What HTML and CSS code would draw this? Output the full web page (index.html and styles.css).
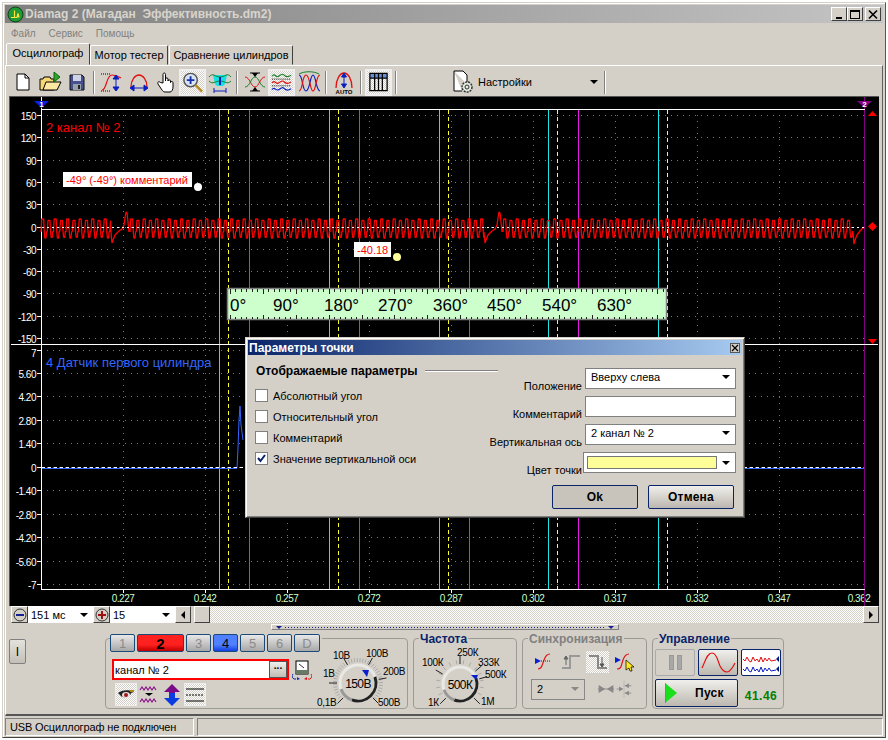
FILE: index.html
```html
<!DOCTYPE html>
<html lang="ru">
<head>
<meta charset="utf-8">
<title>Diamag 2</title>
<link rel="stylesheet" href="styles.css">
</head>
<body>
<div class="window">
  <div class="titlebar">
    <svg class="app-icon" viewBox="0 0 17 17" width="17" height="17"><circle cx="8.500" cy="8.500" r="7.500" fill="#1f9a35" stroke="#0a3d12" stroke-width="1"/><path d="M4 11.500h3.500V4.500v7H10l1-4 1 4" fill="none" stroke="#ffe23a" stroke-width="1.200"/></svg>
    <span class="app-title">Diamag 2 (Магадан&nbsp; Эффективность.dm2)</span>
    <div class="win-btns">
      <span class="win-btn"><svg viewBox="0 0 14 13" width="14" height="13"><rect x="4" y="9" width="6" height="2"/></svg></span>
      <span class="win-btn"><svg viewBox="0 0 14 13" width="14" height="13"><path d="M2 2h10v9H2zM3 4v6h8V4z" fill-rule="evenodd"/></svg></span>
      <span class="win-btn win-btn-close"><svg viewBox="0 0 14 13" width="14" height="13"><path d="M3 2.500l8 8M11 2.500l-8 8" stroke="#000" stroke-width="1.600"/></svg></span>
    </div>
  </div>
  <div class="menubar"><span>Файл</span><span>Сервис</span><span>Помощь</span></div>
  <div class="tabs">
    <span class="tab tab-active">Осциллограф</span>
    <span class="tab tab-2">Мотор тестер</span>
    <span class="tab tab-3">Сравнение цилиндров</span>
  </div>
  <div class="tabbody">
    <div class="toolbar">
      <span class="tool"><svg viewBox="0 0 24 24"><path d="M6 4h8l4 4v12H6z" fill="#fff" stroke="#000"/><path d="M14 4v4h4" fill="none" stroke="#000"/></svg></span>
      <span class="tool"><svg viewBox="0 0 24 24"><path d="M2 9h3l1-2h6l1 2h3v11H2z" fill="#f7d774" stroke="#000"/><path d="M5 20l3-8h15l-4 8z" fill="#ffe9a0" stroke="#000"/><path d="M16 2l6 5-6 5z" fill="#2da52d" stroke="#0a6a0a"/></svg></span>
      <span class="tool"><svg viewBox="0 0 24 24"><path d="M5 5h12l2 2v13H5z" fill="#47518f" stroke="#111"/><rect x="8" y="5" width="8" height="6" fill="#cfd3e6"/><rect x="8" y="14" width="8" height="6" fill="#9aa0a8"/><rect x="13" y="15" width="2" height="4" fill="#222"/></svg></span>
      <span class="tool-sep"></span>
      <span class="tool"><svg viewBox="0 0 24 24"><path d="M2 20c5 0 4-15 10-15 3 0 6 1 9 3" fill="none" stroke="#e01010" stroke-width="1.200"/><path d="M1 4h9M1 21h9" stroke="#000" stroke-dasharray="1 1"/><path d="M16 6v14M13 9l3-4 3 4zM13 17l3 4 3-4z" fill="#0a1fc0" stroke="#0a1fc0"/></svg></span>
      <span class="tool"><svg viewBox="0 0 24 24"><path d="M4 17C4 10 8 5 12 5s8 5 8 12" fill="none" stroke="#e01010" stroke-width="1.300"/><path d="M4 18h16M7 15l-4 3 4 3zM17 15l4 3-4 3z" fill="#0a1fc0" stroke="#0a1fc0"/></svg></span>
      <span class="tool"><svg viewBox="0 0 24 24"><path d="M9 13V4.500c0-2 2.500-2 2.500 0V11l0-2c0-1.500 2.500-1.500 2.500 0v2c0-1.500 2.500-1.500 2.500 0v1.500c0-1.300 2.500-1.300 2.500 0V17c0 2-1 5-3 5h-5c-2 0-3-2-5-5l-2-3c-1-2 1-3 2.500-1.500z" fill="#fff" stroke="#000"/></svg></span>
      <span class="tool tool-on"><svg viewBox="0 0 24 24"><circle cx="10" cy="10" r="7" fill="#d8e6f4" stroke="#555" stroke-width="1.500"/><path d="M10 6v8M6 10h8" stroke="#1a2fb0" stroke-width="2"/><path d="M15 15l7 7" stroke="#b98a20" stroke-width="2.500"/></svg></span>
      <span class="tool"><svg viewBox="0 0 24 24"><path d="M5 5h14l-2 9-2 2H9l-2-2z" fill="#19e0e0"/><path d="M1 7c4-5 6 0 11 0s7-5 11 0" fill="none" stroke="#18802a"/><path d="M1 11c4 4 6 0 11 0s7 4 11 0" fill="none" stroke="#18802a"/><path d="M12 7v8" stroke="#0a1fc0" stroke-width="2"/><path d="M6 21h12M6 18v5M18 18v5" stroke="#0a1fc0"/></svg></span>
      <span class="tool-sep"></span>
      <span class="tool"><svg viewBox="0 0 24 24"><path d="M2 7c5 0 6 10 10 10s5-10 10-10" fill="none" stroke="#e01010"/><path d="M2 17c5 0 6-10 10-10s5 10 10 10" fill="none" stroke="#18802a"/><path d="M7 3h10M7 21h10" stroke="#000"/><path d="M9 3h6l-3 4zM9 21h6l-3-4z"/></svg></span>
      <span class="tool tool-on"><svg viewBox="0 0 24 24"><path d="M2 6c3-4 4 2 7 0s4-3 6-1 4 2 7 0" fill="none" stroke="#18802a" stroke-width="1.200"/><path d="M2 13c3-4 4 2 7 0s4-3 6-1 4 2 7 0" fill="none" stroke="#e01010" stroke-width="1.200"/><path d="M2 20c3-4 4 2 7 0s4-3 6-1 4 2 7 0" fill="none" stroke="#0a1fc0" stroke-width="1.200"/><path d="M2 9h20M2 16h20" stroke="#000" stroke-dasharray="1 1"/></svg></span>
      <span class="tool"><svg viewBox="0 0 24 24"><path d="M2 5c4 0 3 16 7 16s4-16 7-16 3 16 7 16" fill="none" stroke="#0a1fc0" stroke-width="1.200"/><path d="M2 21c4 0 3-16 7-16s4 16 7 16 3-16 7-16" fill="none" stroke="#e01010" stroke-width="1.200"/><path d="M2 4c5-3 15-3 20 0" fill="none" stroke="#18802a"/></svg></span>
      <span class="tool-sep"></span>
      <span class="tool"><svg viewBox="0 0 24 24"><path d="M4 18C4 9 8 3 12 3s8 6 8 15" fill="none" stroke="#e01010" stroke-width="1.300"/><path d="M12 4v13M9.500 7L12 3l2.500 4zM9.500 14l2.500 4 2.500-4z" fill="#0a1fc0" stroke="#0a1fc0"/><text x="12" y="24" class="auto-text">AUTO</text></svg></span>
      <span class="tool-sep"></span>
      <span class="tool tool-on"><svg viewBox="0 0 24 24"><rect x="3" y="3" width="18" height="5" fill="#6a8fd8"/><path d="M3 3h18v18H3zM3 8h18M8 3v18M12 3v18M16 3v18" fill="none" stroke="#000" stroke-width="1.300"/></svg></span>
      <span class="tool-sep"></span>
      <div class="settings">
        <svg viewBox="0 0 24 24" width="24" height="24"><path d="M3 1h9l4 4v9M3 1v20h8" fill="#fff" stroke="#000"/><circle cx="16" cy="17" r="5" fill="#dfe9dc" stroke="#333" stroke-dasharray="2 1" stroke-width="1.500"/><circle cx="16" cy="17" r="2" fill="none" stroke="#333"/></svg>
        <span class="settings-label">Настройки</span>
        <span class="arrow settings-arrow"></span>
      </div>
      <span class="tool-sep"></span>
    </div>
    <div class="chart">
      <svg id="plot" class="plot" viewBox="10 97 869 509" width="869" height="509"></svg>
    </div>
    <div class="scrollrow">
      <span class="round-btn"><svg viewBox="0 0 14 14" width="14" height="14"><circle cx="7" cy="7" r="6" fill="#d4d0c8" stroke="#333"/><path d="M3 7h8" stroke="#14208f" stroke-width="2"/></svg></span>
      <span class="scroll-combo combo-a">151 мс<span class="arrow"></span></span>
      <span class="round-btn"><svg viewBox="0 0 14 14" width="14" height="14"><circle cx="7" cy="7" r="6" fill="#d4d0c8" stroke="#333"/><path d="M3 7h8M7 3v8" stroke="#a01010" stroke-width="2"/></svg></span>
      <span class="scroll-combo combo-b">15<span class="arrow"></span></span>
      <span class="scroll-btn"><span class="tri-left"></span></span>
      <span class="scroll-thumb"></span>
      <span class="scroll-track"></span>
      <span class="scroll-btn"><span class="tri-right"></span></span>
    </div>
    <div class="splitter"><span class="split-tri"></span><span class="split-dots"></span><span class="split-tri"></span></div>
    <div class="controls">
      <span class="side-btn">I</span>
      <div class="group group-channel">
        <div class="channel-col">
          <div class="channels">
            <span class="ch">1</span><span class="ch ch-red">2</span><span class="ch">3</span><span class="ch ch-blue">4</span><span class="ch">5</span><span class="ch">6</span><span class="ch ch-d">D</span>
          </div>
          <div class="name-row">
            <div class="name-field"><span class="name-text">канал № 2</span><span class="dots-btn">...</span></div>
            <svg class="meter" viewBox="0 0 20 20" width="20" height="20"><rect x="4" y="1" width="12" height="13" fill="#fff" stroke="#000"/><rect x="4" y="10" width="12" height="4" fill="#667a66"/><path d="M7 4l5 4" stroke="#333"/><path d="M1 14a3 3 0 0 0 3 5" fill="none" stroke="#1020b0"/><path d="M19 14a3 3 0 0 1-3 5" fill="none" stroke="#e01010"/><path d="M5 17l3 2-3 1z" fill="#1020b0"/><path d="M15 17l-3 2 3 1z" fill="#e01010"/></svg>
          </div>
          <div class="view-row">
            <span class="view-btn view-on"><svg viewBox="0 0 20 20" width="20" height="20"><path d="M2 8c3-3 11-4 16-1l-3 1c-1 5-9 6-11 2z" fill="#222"/><ellipse cx="10" cy="10" rx="4" ry="3" fill="#e8e0e0"/><circle cx="10" cy="10" r="2" fill="#a01818"/><path d="M14 6l4 0" stroke="#b08a10" stroke-width="2"/></svg></span>
            <span class="view-btn"><svg viewBox="0 0 20 20" width="20" height="20"><path d="M1 5l2-3 2 3 2-3 2 3 2-3 2 3 2-3 2 3M1 17l2-3 2 3 2-3 2 3 2-3 2 3 2-3 2 3" fill="none" stroke="#8a108a" stroke-width="1.200"/><path d="M6 8h8l-4 3z"/></svg></span>
            <span class="view-btn"><svg viewBox="0 0 20 24" width="20" height="24"><path d="M10 1l8 8h-5v5H7V9H2z" fill="#7a0a8a"/><path d="M10 23l-8-8h5v-5h6v5h5z" fill="#0a3ce0"/></svg></span>
            <span class="view-btn view-on"><svg viewBox="0 0 20 20" width="20" height="20"><path d="M1 4h18M1 16h18" stroke="#000" stroke-width="1.200"/><path d="M1 10h18" stroke="#000" stroke-dasharray="2 1"/></svg></span>
          </div>
        </div>
        <svg class="knob" viewBox="320 640 86 69" width="86" height="69">
          <g id="knob-a"></g>
          <text x="358" y="689" class="knob-value" text-anchor="middle">150В</text>
          <path d="M362 671h7l-2 7z" fill="#0a1fd0"/>
          <text x="333" y="660" class="knob-label">10В</text>
          <text x="366" y="658" class="knob-label">100В</text>
          <text x="383" y="676" class="knob-label">200В</text>
          <text x="378" y="707" class="knob-label">500В</text>
          <text x="317" y="707" class="knob-label">0,1В</text>
          <text x="323" y="678" class="knob-label">1В</text>
        </svg>
      </div>
      <div class="group group-freq">
        <span class="group-title">Частота</span>
        <svg class="knob knob-f" viewBox="414 640 102 69" width="102" height="69">
          <g id="knob-b"></g>
          <text x="460" y="690" class="knob-value" text-anchor="middle">500К</text>
          <path d="M471 676h7l-2 5z" fill="#0a1fd0"/>
          <text x="457" y="657" class="knob-label">250К</text>
          <text x="422" y="667" class="knob-label">100К</text>
          <text x="478" y="667" class="knob-label">333К</text>
          <text x="485" y="679" class="knob-label">500К</text>
          <text x="428" y="707" class="knob-label">1К</text>
          <text x="481" y="706" class="knob-label">1М</text>
        </svg>
      </div>
      <div class="group group-sync">
        <span class="group-title title-off">Синхронизация</span>
        <div class="sync-row">
          <span class="sync-btn"><svg viewBox="0 0 22 22" width="22" height="22"><path d="M5 18c4 0 4-4 6-9 1-3 3-6 6-6" fill="none" stroke="#e01010" stroke-width="1.200"/><path d="M2 7l6 3-6 3z" fill="#0a1fd0"/><path d="M8 10h9" stroke="#0a1fd0" stroke-dasharray="1 1"/></svg></span>
          <span class="sync-btn"><svg viewBox="0 0 22 22" width="22" height="22"><path d="M2 17h8V5h10" fill="none" stroke="#999" stroke-width="2"/><path d="M6 5v9M4 8l2-3 2 3z" stroke="#666" fill="#666"/></svg></span>
          <span class="sync-btn sync-on"><svg viewBox="0 0 22 22" width="22" height="22"><path d="M2 5h9v12h9" fill="none" stroke="#888" stroke-width="2"/><path d="M15 6v9M13 13l2 3 2-3z" stroke="#555" fill="#555"/></svg></span>
          <span class="sync-btn"><svg viewBox="0 0 22 22" width="22" height="22"><path d="M3 18c5 0 4-4 6-9 1-3 3-6 6-6" fill="none" stroke="#e01010" stroke-width="1.200"/><path d="M1 6l6 3-6 3z" fill="#0a1fd0"/><path d="M12 9l8 7-3 0 1 4-2 0-1-3-3 2z" fill="#ffe820" stroke="#000" stroke-width=".7"/></svg></span>
        </div>
        <div class="sync-row sync-row-2">
          <span class="sync-combo">2<span class="arrow arrow-gray"></span></span>
          <span class="sync-btn"><svg viewBox="0 0 22 22" width="22" height="22"><path d="M1 11h20" stroke="#888"/><path d="M2 6l8 5-8 5zM20 6l-8 5 8 5z" fill="#888"/></svg></span>
          <span class="sync-btn"><svg viewBox="0 0 22 22" width="22" height="22"><path d="M11 1v20" stroke="#aaa" stroke-dasharray="2 1"/><path d="M2 11h7" stroke="#888"/><path d="M12 7h8M12 16h8" stroke="#888"/><path d="M12 7l5-3v6zM12 16l5-3v6zM10 11l-5-3v6z" fill="#888"/></svg></span>
        </div>
      </div>
      <div class="group group-ctl">
        <span class="group-title">Управление</span>
        <div class="ctl-grid">
          <span class="ctl-btn ctl-off"><span class="pause-bar"></span><span class="pause-bar"></span></span>
          <span class="ctl-btn"><svg viewBox="0 0 36 24" width="36" height="24"><path d="M2 17c3-6 5-15 10-15s6 9 8 13 4 6 7 6 6-5 8-9" fill="none" stroke="#e01010" stroke-width="1.200"/></svg></span>
          <span class="ctl-btn ctl-white"><svg viewBox="0 0 38 24" width="38" height="24"><path d="M1 8l2 2 2-4 2 4 2 1 2-5 2 4 2-2 2 3 2-5 2 5 2-4 2 3 2-3 2 3 5-1" fill="none" stroke="#e01010"/><path d="M1 18l2 2 2-4 2 4 2 1 2-5 2 4 2-2 2 3 2-5 2 5 2-4 2 3 2-3 2 3 5-1" fill="none" stroke="#0a1fc0"/><path d="M37 5v6l-3-3zM37 15v6l-3-3z" fill="#001a80"/></svg></span>
          <span class="ctl-btn ctl-start"><svg viewBox="0 0 12 24" width="12" height="24"><path d="M0 2l12 10L0 22z" fill="#1adf1a"/><path d="M0 2v20" stroke="#777"/></svg><span class="start-label">Пуск</span></span>
          <span class="ctl-value">41.46</span>
        </div>
      </div>
    </div>
  </div>
  <div class="statusbar">
    <span class="status-pane status-first">USB Осциллограф не подключен</span>
    <span class="status-pane status-rest"></span>
  </div>
  <div class="dialog">
    <div class="dlg-title"><span>Параметры точки</span><span class="dlg-close"><svg viewBox="0 0 8 8" width="8" height="8"><path d="M1 1l6 6M7 1L1 7" stroke="#000" stroke-width="1.300"/></svg></span></div>
    <div class="dlg-body">
      <div class="dlg-left">
        <div class="dlg-head"><b>Отображаемые параметры</b><span class="dlg-rule"></span></div>
        <label class="chk"><span class="box"></span>Абсолютный угол</label>
        <label class="chk"><span class="box"></span>Относительный угол</label>
        <label class="chk"><span class="box"></span>Комментарий</label>
        <label class="chk"><span class="box"><svg viewBox="0 0 11 11" width="11" height="11"><path d="M2 5l2.500 3L9 2" fill="none" stroke="#0a246a" stroke-width="2"/></svg></span>Значение вертикальной оси</label>
      </div>
      <div class="dlg-right">
        <span class="dlg-label">Положение</span><span class="field">Вверху слева<span class="arrow"></span></span>
        <span class="dlg-label">Комментарий</span><span class="field"></span>
        <span class="dlg-label">Вертикальная ось</span><span class="field">2 канал № 2<span class="arrow"></span></span>
        <span class="dlg-label">Цвет точки</span><span class="field field-color"><span class="swatch"></span><span class="arrow"></span></span>
      </div>
    </div>
    <div class="dlg-actions"><span class="dlg-btn dlg-ok">Ok</span><span class="dlg-btn">Отмена</span></div>
  </div>
</div>
<script src="chart.js"></script>
</body>
</html>
```
FILE: styles.css
```css
* { box-sizing: border-box; }
html, body { margin: 0; padding: 0; background: #fff; }
body { width: 888px; height: 740px; overflow: hidden; font: 11px "Liberation Sans", Arial, sans-serif; color: #000; }

.window { position: relative; width: 884px; height: 736px; margin: 2px 0 0 2px; padding: 2px 2px 1px; background: #d4d0c8; border: 1px solid; border-color: #d4d0c8 #555 #444 #d4d0c8; box-shadow: inset 1px 1px 0 #fff; display: flex; flex-direction: column; }

.titlebar { height: 18px; flex: none; display: flex; align-items: center; padding: 0 2px; background: linear-gradient(90deg, #808080, #c4c4c4); }
.app-icon { flex: none; margin-right: 1px; }
.app-title { font-weight: bold; font-size: 12px; color: #d8d4cc; white-space: nowrap; }
.win-btns { margin-left: auto; display: flex; gap: 0; }
.win-btn { width: 16px; height: 14px; background: #d4d0c8; border: 1px solid; border-color: #fff #404040 #404040 #fff; display: flex; align-items: center; justify-content: center; }
.win-btn-close { margin-left: 2px; }

.menubar { height: 21px; flex: none; display: flex; gap: 13px; align-items: center; padding-left: 6px; color: #808080; font-size: 10px; }

.tabs { height: 21px; flex: none; display: flex; align-items: flex-end; padding-left: 1px; }
.tab { height: 20px; line-height: 18px; text-align: center; white-space: nowrap; background: #d4d0c8; border: 1px solid; border-color: #fff #404040 transparent #fff; border-radius: 2px 2px 0 0; margin-right: 1px; }
.tab-active { width: 84px; height: 22px; margin-right: 0; position: relative; z-index: 1; }
.tab-2 { width: 78px; }
.tab-3 { width: 124px; }

.tabbody { flex: none; height: 651px; border-top: 1px solid #fff; border-left: 1px solid #fff; border-right: 1px solid #606060; border-bottom: 2px solid #555; display: flex; flex-direction: column; }

.toolbar { flex: none; height: 30px; padding: 2px 0 0 3px; display: flex; align-items: center; }
.tool { flex: none; width: 27px; height: 27px; display: flex; align-items: center; justify-content: center; }
.tool svg { width: 24px; height: 24px; display: block; }
.tool-on { border: 2px solid #eee; background: repeating-conic-gradient(#fff 0 25%, #d4d0c8 0 50%) 0 0 / 2px 2px; }
.tool-sep { flex: none; width: 8px; height: 23px; margin: 0; background: linear-gradient(90deg, transparent 3px, #808080 3px, #808080 4px, #fff 4px, #fff 5px, transparent 5px); }
.auto-text { font: bold 6px "Liberation Sans", sans-serif; text-anchor: middle; }
.settings { flex: none; width: 150px; margin-left: 51px; display: flex; align-items: center; }
.settings-label { margin-left: 3px; }
.settings-arrow { margin-left: 58px; }

.arrow { display: inline-block; width: 0; height: 0; border: 4px solid transparent; border-top: 4px solid #000; border-bottom: 0; }
.arrow-gray { border-top-color: #888; }

.chart { flex: none; margin-left: 3px; height: 510px; width: 870px; border-top: 1px solid #555; border-left: 1px solid #555; background: #000; }
.plot { display: block; }
.ax { font: 10px "Liberation Sans", sans-serif; letter-spacing: -.5px; fill: #fff; text-anchor: end; }
.tx { font: 10px "Liberation Sans", sans-serif; letter-spacing: -.5px; fill: #ccffcc; text-anchor: middle; }
.marker-n { font: bold 8px "Liberation Sans", sans-serif; fill: #fff; text-anchor: middle; }
.ch-red-name { font: 13px "Liberation Sans", sans-serif; fill: #ff0000; }
.ch-blue-name { font: 13px "Liberation Sans", sans-serif; fill: #3366ff; }
.tip { font: 11px "Liberation Sans", sans-serif; fill: #ff0000; }
.ruler-t { font: 17px "Liberation Sans", sans-serif; fill: #000; }

.scrollrow { flex: none; height: 17px; margin-left: 5px; display: flex; align-items: stretch; width: 868px; }
.round-btn { flex: none; width: 17px; background: #d4d0c8; border: 1px solid; border-color: #fff #404040 #404040 #fff; display: flex; align-items: center; justify-content: center; }
.scroll-combo { flex: none; background: #fff; display: flex; align-items: center; justify-content: space-between; padding: 0 5px 0 3px; }
.combo-a { width: 65px; }
.combo-b { width: 65px; background: #fff; }
.scroll-btn { flex: none; width: 16px; background: #d4d0c8; border: 1px solid; border-color: #fff #404040 #404040 #fff; display: flex; align-items: center; justify-content: center; }
.tri-left { width: 0; height: 0; border: 4px solid transparent; border-right: 4px solid #000; border-left: 0; }
.tri-right { width: 0; height: 0; border: 4px solid transparent; border-left: 4px solid #000; border-right: 0; }
.scroll-thumb { flex: none; width: 16px; margin-left: 3px; background: #d4d0c8; border: 1px solid; border-color: #fff #404040 #404040 #fff; }
.scroll-track { flex: 1; background: repeating-conic-gradient(#fff 0 25%, #d4d0c8 0 50%) 0 0 / 2px 2px; }

.splitter { flex: none; width: 348px; height: 6px; margin: 1px 0 0 265px; border: 1px solid; border-color: #fff #808080 #808080 #fff; display: flex; align-items: center; padding: 0 4px; gap: 3px; }
.split-tri { width: 0; height: 0; border: 3px solid transparent; border-top: 3px solid #14208f; border-bottom: 0; }
.split-dots { flex: 1; height: 1px; background: repeating-linear-gradient(90deg, #14208f 0 1px, transparent 1px 3px); }

.controls { flex: none; height: 81px; display: flex; align-items: flex-start; padding-top: 8px; }
.side-btn { flex: none; margin: 1px 0 0 3px; width: 17px; height: 25px; display: flex; align-items: center; justify-content: center; background: linear-gradient(#e4e2dc, #c4c0b8); border: 1px solid #808080; border-radius: 2px; font-size: 12px; }

.group { flex: none; position: relative; height: 71px; margin-left: 5px; border: 1px solid #9c9c96; border-radius: 4px; }
.group-channel { width: 303px; margin-left: 79px; display: flex; }
.group-freq { width: 104px; }
.group-sync { width: 125px; }
.group-ctl { width: 132px; }
.group-title { position: absolute; left: 5px; top: -6px; padding: 0 1px; background: #d4d0c8; font: bold 12px "Liberation Sans", sans-serif; color: #0a246a; line-height: 12px; white-space: nowrap; }
.title-off { color: #808080; }

.channel-col { flex: none; width: 214px; margin-top: -5px; padding-left: 4px; display: flex; flex-direction: column; }
.channels { display: flex; gap: 2px; height: 18px; width: 212px; background: #d4d0c8; }
.ch { flex: none; width: 25px; height: 18px; display: flex; align-items: center; justify-content: center; border: 1px solid #1a4a7a; border-radius: 2px; background: linear-gradient(#e8e8e8, #a8a8a8); color: #8a8a8a; font-size: 13px; }
.ch-red { width: 47px; background: linear-gradient(#ff2020 60%, #c00000); color: #000; font-weight: bold; font-size: 15px; }
.ch-blue { background: linear-gradient(#5080ff 60%, #1040e0); color: #001; font-size: 13px; }
.ch-d { width: 26px; }
.name-row { display: flex; align-items: center; margin-top: 7px; height: 21px; padding-left: 2px; }
.name-field { width: 177px; height: 21px; background: #fff; border: 2px solid #f00; display: flex; align-items: center; justify-content: space-between; padding-left: 1px; }
.dots-btn { width: 18px; height: 17px; background: linear-gradient(#efeeea, #c0bcb4); border: 1px solid #555; font-weight: bold; font-size: 10px; line-height: 8px; text-align: center; }
.meter { margin-left: 3px; }
.view-row { display: flex; gap: 1px; margin-top: 3px; padding-left: 5px; align-items: center; height: 23px; }
.view-btn { flex: none; width: 22px; height: 23px; display: flex; align-items: center; justify-content: center; }
.view-on { background: repeating-conic-gradient(#fff 0 25%, #d4d0c8 0 50%) 0 0 / 2px 2px; border: 1px solid #eee; }

.knob { display: block; overflow: visible; flex: none; }
.knob-label { font: 10px "Liberation Sans", sans-serif; letter-spacing: -.3px; fill: #000; }
.knob-value { font: 12px "Liberation Sans", sans-serif; letter-spacing: -.6px; fill: #000; }

.sync-row { display: flex; align-items: center; margin: 12px 0 0 9px; gap: 4px; }
.sync-btn { flex: none; width: 23px; height: 22px; display: flex; align-items: center; justify-content: center; }
.sync-on { background: repeating-conic-gradient(#fff 0 25%, #d4d0c8 0 50%) 0 0 / 2px 2px; }
.sync-row-2 { margin: 5px 0 0 8px; gap: 0; }
.sync-row-2 .sync-btn { width: 18px; }
.sync-combo { flex: none; width: 54px; height: 21px; border: 1px solid #888; display: flex; align-items: center; justify-content: space-between; padding: 0 5px; margin-right: 12px; }

.ctl-grid { display: grid; grid-template-columns: 40px 40px 40px; column-gap: 3px; row-gap: 3px; padding: 10px 0 0 2px; grid-template-rows: 27px 28px; }
.ctl-btn { display: flex; align-items: center; justify-content: center; border: 1px solid #0a246a; border-radius: 2px; background: linear-gradient(#f0efeb, #bcb8b0); }
.ctl-off { border-color: #aaa; background: #d4d0c8; gap: 3px; }
.pause-bar { width: 5px; height: 15px; background: #a8a8a8; border: 1px solid #999; }
.ctl-white { background: #fff; }
.ctl-start { grid-column: 1 / span 2; justify-content: flex-start; padding-left: 9px; border-width: 1px; }
.start-label { font-weight: bold; font-size: 12px; margin-left: 18px; letter-spacing: .3px; }
.ctl-value { color: #008000; font: bold 12px "Liberation Sans", sans-serif; letter-spacing: .5px; display: flex; align-items: center; justify-content: center; padding-top: 6px; }

.statusbar { flex: none; height: 19px; margin-top: 2px; display: flex; gap: 3px; }
.status-pane { height: 18px; border: 1px solid; border-color: #808080 #fff #fff #808080; line-height: 16px; padding-left: 4px; white-space: nowrap; letter-spacing: -.15px; }
.status-first { flex: none; width: 189px; }
.status-rest { flex: 1; }

.dialog { position: absolute; left: 242px; top: 334px; width: 500px; height: 181px; background: #d4d0c8; border: 1px solid; border-color: #d4d0c8 #404040 #404040 #d4d0c8; box-shadow: inset 1px 1px 0 #fff, inset -1px -1px 0 #808080; padding: 2px; display: flex; flex-direction: column; }
.dlg-title { flex: none; height: 15px; padding: 0 1px; display: flex; align-items: center; justify-content: space-between; color: #fff; font: bold 12px "Liberation Sans", sans-serif; background: linear-gradient(90deg, #0a246a, #a6caf0); }
.dlg-close { width: 10px; height: 10px; background: #d4d0c8; border: 1px solid #555; display: flex; align-items: center; justify-content: center; margin-right: 1px; }
.dlg-body { flex: none; display: flex; height: 118px; padding-top: 13px; }
.dlg-left { flex: none; width: 252px; padding-left: 7px; }
.dlg-head { display: flex; align-items: center; gap: 7px; height: 16px; margin: -5px 0 6px 1px; }
.dlg-head b { font-size: 12px; white-space: nowrap; }
.dlg-rule { width: 73px; height: 2px; background: #808080; border-bottom: 1px solid #fff; }
.chk { display: flex; align-items: center; gap: 5px; height: 21px; }
.box { flex: none; width: 13px; height: 13px; background: #fff; border: 1px solid #808080; display: flex; align-items: center; justify-content: center; }
.dlg-right { flex: none; width: 241px; display: grid; grid-template-columns: 90px 151px; grid-auto-rows: 21px; row-gap: 7px; column-gap: 0; margin-left: -5px; }
.dlg-label { justify-self: end; align-self: end; margin: 0 3px -3px 0; white-space: nowrap; }
.field { background: #fff; border: 1px solid #808080; display: flex; align-items: center; justify-content: space-between; padding: 0 5px 3px 5px; white-space: nowrap; }
.field-color { margin-left: -2px; padding: 0 5px 0 3px; }
.swatch { width: 130px; height: 13px; background: #ffff99; border: 1px solid #777; }
.dlg-actions { flex: none; display: flex; justify-content: flex-end; gap: 10px; padding: 12px 8px 0 0; }
.dlg-btn { width: 86px; height: 24px; display: flex; align-items: center; justify-content: center; border: 1px solid #0a246a; border-radius: 2px; background: linear-gradient(#f0efeb, #bcb8b0); font-weight: bold; font-size: 12px; letter-spacing: .2px; }
.dlg-ok { background: #c8c4bc; }
```
FILE: chart.js
```js
(function () {
  var svg = document.getElementById('plot');
  var h = [];
  function line(x1, y1, x2, y2, c, extra) {
    h.push('<line x1="' + x1 + '" y1="' + y1 + '" x2="' + x2 + '" y2="' + y2 + '" stroke="' + c + '" shape-rendering="crispEdges" ' + (extra || '') + '/>');
  }
  function text(x, y, cls, s) {
    h.push('<text x="' + x + '" y="' + y + '" class="' + cls + '">' + s + '</text>');
  }
  var i, y;
  var upper = ['150', '120', '90', '60', '30', '0', '-30', '-60', '-90', '-120', '-150'];
  var lower = ['7', '5.60', '4.20', '2.80', '1.40', '0', '-1.40', '-2.80', '-4.20', '-5.60', '-7'];
  for (i = 0; i < 11; i++) {
    y = Math.round(115 + 22.3 * i) + 0.5;
    line(41, y, 864, y, '#777', 'stroke-dasharray="1 5"');
    line(37, y, 41, y, '#fff');
    text(36, y + 4, 'ax', upper[i]);
    y = Math.round(349.5 + 23.45 * i) + 0.5;
    line(41, y, 864, y, '#777', 'stroke-dasharray="1 5"');
    line(37, y, 41, y, '#fff');
    text(36, y + (i === 0 ? 6 : 4), 'ax', lower[i]);
  }
  var times = ['0.227', '0.242', '0.257', '0.272', '0.287', '0.302', '0.317', '0.332', '0.347', '0.362'];
  for (i = 0; i < 10; i++) {
    var vx = 123.5 + 82 * i;
    if (i < 9) line(vx, 109, vx, 593, '#777', 'stroke-dasharray="1 5"');
    if (i < 9) line(vx, 589, vx, 593, '#fff');
    text(i === 9 ? 859 : 123 + 82 * i, 602, 'tx', times[i]);
  }
  [219, 329, 439, 548, 658].forEach(function (x) { line(x + 0.5, 110, x + 0.5, 589, '#19e6e6'); });
  [228, 338, 448, 557, 667].forEach(function (x) { line(x + 0.5, 110, x + 0.5, 589, '#ffff33', 'stroke-dasharray="4 3"'); });
  [249, 359, 469, 578].forEach(function (x) { line(x + 0.5, 110, x + 0.5, 589, '#e619e6'); });

  // purple cursor, axes, frame lines
  line(864.5, 97, 864.5, 606, '#800080');
  line(41.5, 97, 41.5, 590, '#fff');
  line(41, 109.5, 865, 109.5, '#fff');
  line(11, 344.5, 878, 344.5, '#fff');
  line(41, 589.5, 865, 589.5, '#fff');

  // red trace
  var shape = [[0, 232], [0.7, 219], [2.7, 219], [3.3, 232], [3.9, 238], [5, 238], [5.6, 232]];
  var glitch = [[-1, 232], [0, 243], [1, 240], [3, 235], [7, 231], [10, 229], [12, 225], [13, 218], [14, 212], [15, 213], [16, 222], [17, 232]];
  function trace(x0, x1) {
    var pts = [], n = 0;
    for (var x = x0; x < x1; x += 6.25) {
      var d = n % 2 ? 1.5 : 0;
      shape.forEach(function (p) { if (x + p[0] < x1) pts.push((x + p[0]).toFixed(1) + ',' + (p[1] + (p[1] < 226 ? d : -d / 2))); });
      n++;
    }
    return pts;
  }
  var runs = [[41, 111], [130, 484], [503, 853]];
  var d = '';
  runs.forEach(function (r, k) {
    d += 'M' + trace(r[0], r[1]).join(' L');
    var g = [112, 485, 854][k];
    if (k < 2) {
      d += ' ' + glitch.map(function (p) { return 'L' + (g + p[0]) + ',' + p[1]; }).join(' ') + ' ';
    } else {
      d += ' L853,232 L854,244 L855,240 L857,235 L860,231 L864,227';
    }
  });
  h.push('<path d="' + d + '" fill="none" stroke="#ff0000" stroke-width="1.300" stroke-linejoin="bevel"/>');
  line(42, 227.5, 864, 227.5, '#fff', 'stroke-dasharray="2 3"');

  // blue trace
  line(42, 468.5, 237, 468.5, '#3366ff');
  line(745, 468.5, 864, 468.5, '#3366ff');
  h.push('<path d="M237,468 L238,448 L239,420 L240,406 L241,425 L243,440" fill="none" stroke="#3366ff"/>');
  line(42, 467.5, 864, 467.5, '#fff', 'stroke-dasharray="3 3"');

  // markers
  h.push('<path d="M34,101h15l-7.500,7z" fill="#0a1fe0"/>');
  text(41.5, 107, 'marker-n', '1');
  h.push('<path d="M857,101h15l-7.500,7z" fill="#800080"/>');
  text(864.5, 107, 'marker-n', '2');
  h.push('<path d="M868,116h9l-4.500,-5z" fill="#ff0000"/>');
  h.push('<path d="M872.500,222l4.500,4.500l-4.500,4.500l-4.500,-4.500z" fill="#ff0000"/>');
  h.push('<path d="M868,339h9l-4.500,5z" fill="#ff0000"/>');

  // names
  text(46, 132, 'ch-red-name', '2 канал № 2');
  text(46, 367, 'ch-blue-name', '4 Датчик первого цилиндра');

  // point labels
  h.push('<rect x="63" y="172" width="129" height="15" fill="#fff"/>');
  text(66, 184, 'tip', '-49° (-49°) комментарий');
  h.push('<circle cx="198" cy="187" r="4" fill="#fff"/>');
  h.push('<rect x="354" y="242" width="37" height="15" fill="#fff"/>');
  text(357, 254, 'tip', '-40.18');
  h.push('<circle cx="397" cy="257" r="4" fill="#ffff99"/>');

  // ruler
  h.push('<rect x="227.500" y="288.500" width="439" height="31" fill="#ccffcc" stroke="#808080" stroke-width="1.500"/>');
  for (i = 0; i < 80; i++) {
    var rx = Math.round(230 + 5.48 * i) + 0.5;
    var big = i % 6 === 0;
    line(rx, 289, rx, big ? 294 : 292, '#222');
    line(rx, 319, rx, big ? 315 : 317, '#222');
  }
  [[230, '0°'], [273, '90°'], [324, '180°'], [378, '270°'], [433, '360°'], [487, '450°'], [542, '540°'], [597, '630°']].forEach(function (t) {
    text(t[0], 311, 'ruler-t', t[1]);
  });
  svg.innerHTML = h.join('');

  // knobs
  function knob(id, cx, cy, r, longs, step) {
    var s = '', a;
    for (a = -225; a <= 45; a += step) {
      var rad = a * Math.PI / 180, c = Math.cos(rad), n = Math.sin(rad);
      s += '<line x1="' + (cx + (r + 3) * c) + '" y1="' + (cy + (r + 3) * n) + '" x2="' + (cx + (r + 7) * c) + '" y2="' + (cy + (r + 7) * n) + '" stroke="#aaa"/>';
    }
    longs.forEach(function (d) {
      var rad = d * Math.PI / 180;
      s += '<line x1="' + (cx + (r + 3) * Math.cos(rad)) + '" y1="' + (cy + (r + 3) * Math.sin(rad)) + '" x2="' + (cx + (r + 11) * Math.cos(rad)) + '" y2="' + (cy + (r + 11) * Math.sin(rad)) + '" stroke="#222"/>';
    });
    s += '<circle cx="' + cx + '" cy="' + cy + '" r="' + r + '" fill="#d4d0c8" stroke="#e8e8e4" stroke-width="3"/>';
    s += '<path d="M' + (cx + r * 0.94) + ' ' + (cy - r * 0.34) + 'A' + r + ' ' + r + ' 0 0 1 ' + (cx - r * 0.34) + ' ' + (cy + r * 0.94) + '" fill="none" stroke="#222" stroke-width="3"/>';
    s += '<path d="M' + (cx - r * 0.34) + ' ' + (cy + r * 0.94) + 'A' + r + ' ' + r + ' 0 0 1 ' + (cx - r * 0.94) + ' ' + (cy + r * 0.34) + '" fill="none" stroke="#999" stroke-width="3"/>';
    document.getElementById(id).innerHTML = s;
  }
  knob('knob-a', 358, 684, 18, [-180, -120, -60, -10, 45, 135], 7);
  knob('knob-b', 460, 685, 17, [-150, -90, -40, -15, 45, 135], 18);
})();
```
